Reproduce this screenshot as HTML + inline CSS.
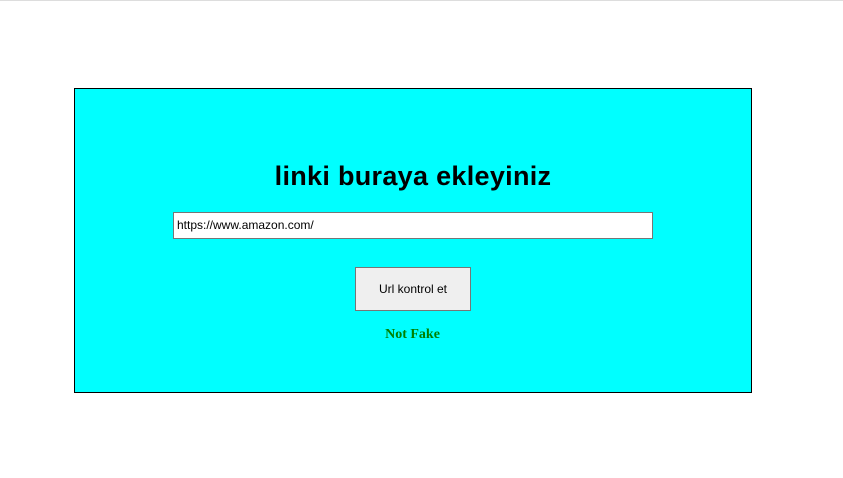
<!DOCTYPE html>
<html><head><style>
body{margin:0;width:843px;height:478px;background:#fff;position:relative;overflow:hidden;font-family:"Liberation Sans",sans-serif}
.top{position:absolute;left:0;top:0;width:843px;height:1px;background:#ddd}
.box{position:absolute;left:74px;top:88px;width:676px;height:303px;background:#0ff;border:1px solid #000}
h1{position:absolute;left:74px;width:678px;top:161px;margin:0;text-align:center;font-size:27px;font-weight:bold;letter-spacing:0.3px}
.inp{position:absolute;left:173px;top:212px;background:#fff;border:1px solid #767676;box-sizing:border-box;width:480px;height:27px;font-size:12px;padding:5px 3px;line-height:14px}
.btn{position:absolute;left:355px;top:267px;width:116px;height:44px;box-sizing:border-box;background:#efefef;border:1px solid #767676;font-size:12px;text-align:center;line-height:42px}
.nf{position:absolute;left:-9px;width:843px;top:327px;text-align:center;font-family:"Liberation Serif",serif;font-weight:bold;font-size:14px;color:#008000}
</style></head><body>
<div class="top"></div>
<div class="box"></div>
<h1>linki buraya ekleyiniz</h1>
<div class="inp">https://www.amazon.com/</div>
<div class="btn">Url kontrol et</div>
<div class="nf">Not Fake</div>
</body></html>
